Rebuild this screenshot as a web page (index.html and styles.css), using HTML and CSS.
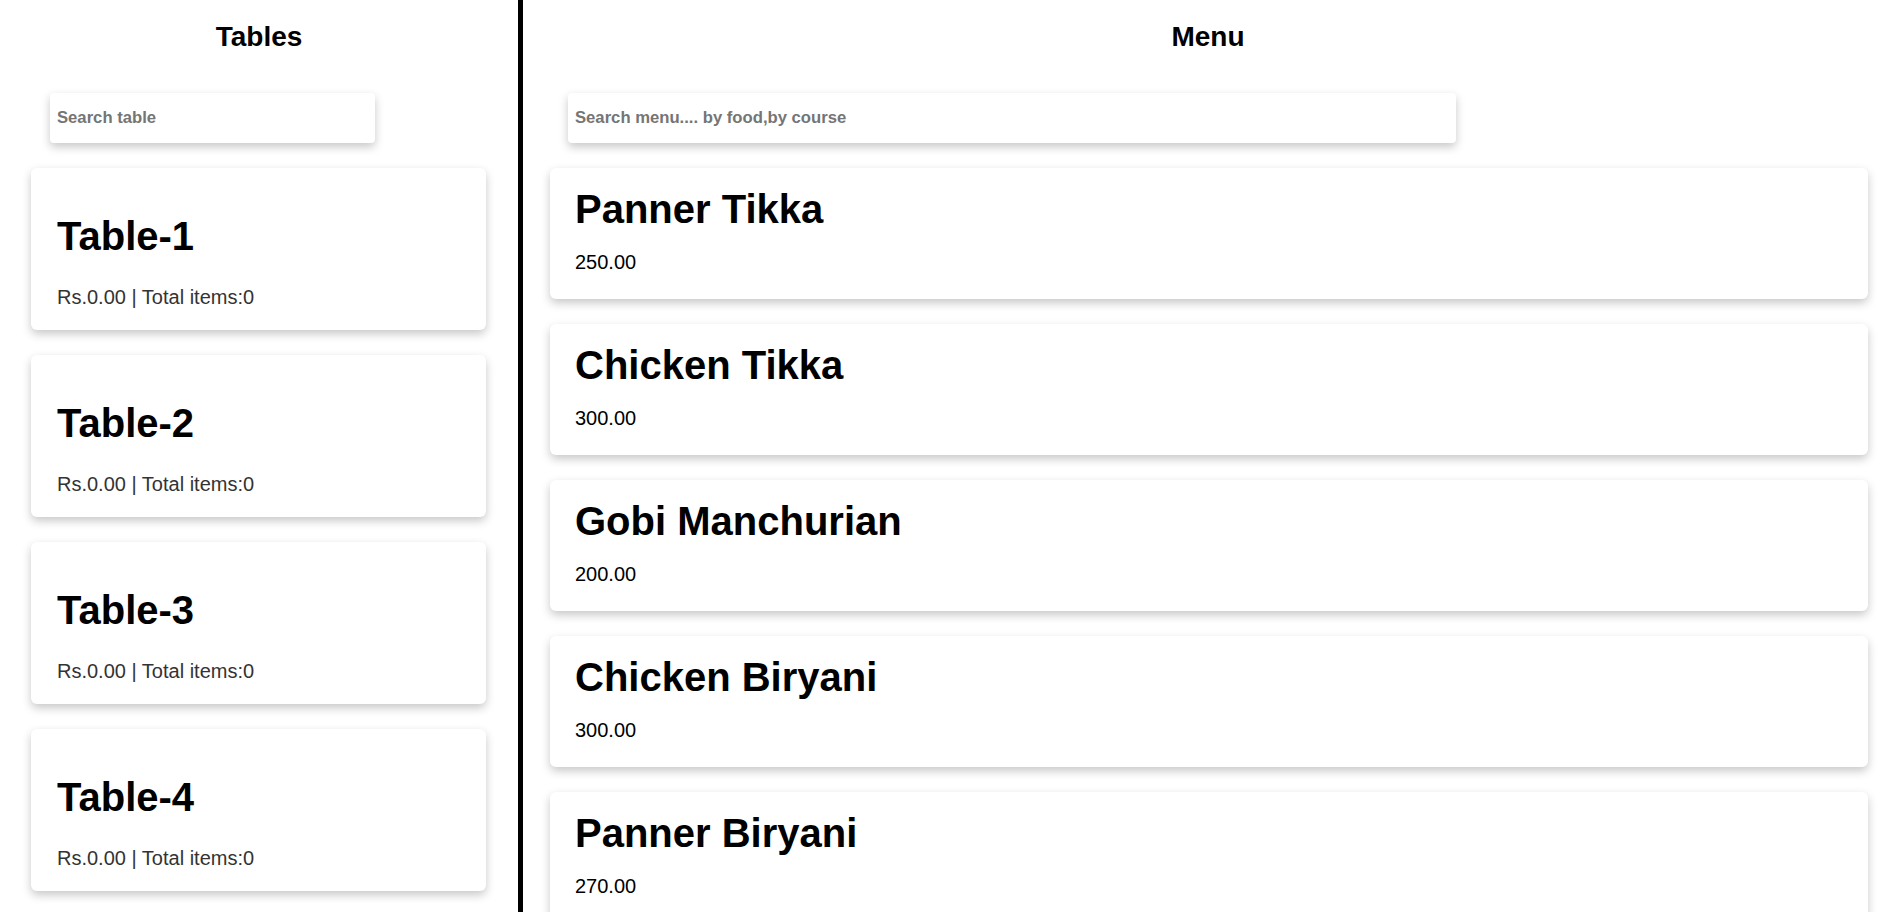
FILE: index.html
```html
<!DOCTYPE html>
<html lang="en">
<head>
<meta charset="utf-8">
<title>Tables and Menu</title>
<link rel="stylesheet" href="styles.css">
</head>
<body>
<div class="app">
  <section class="panel tables-panel">
    <h2 class="panel-title">Tables</h2>
    <input class="search search-tables" type="text" placeholder="Search table">
    <div class="list tables-list">
      <div class="card table-card">
        <h1 class="card-title">Table-1</h1>
        <p class="table-info">Rs.0.00 | Total items:0</p>
      </div>
      <div class="card table-card">
        <h1 class="card-title">Table-2</h1>
        <p class="table-info">Rs.0.00 | Total items:0</p>
      </div>
      <div class="card table-card">
        <h1 class="card-title">Table-3</h1>
        <p class="table-info">Rs.0.00 | Total items:0</p>
      </div>
      <div class="card table-card">
        <h1 class="card-title">Table-4</h1>
        <p class="table-info">Rs.0.00 | Total items:0</p>
      </div>
    </div>
  </section>
  <section class="panel menu-panel">
    <h2 class="panel-title menu-title">Menu</h2>
    <input class="search search-menu" type="text" placeholder="Search menu.... by food,by course">
    <div class="list menu-list">
      <div class="card menu-card">
        <h1 class="card-title">Panner Tikka</h1>
        <p class="price">250.00</p>
      </div>
      <div class="card menu-card">
        <h1 class="card-title">Chicken Tikka</h1>
        <p class="price">300.00</p>
      </div>
      <div class="card menu-card">
        <h1 class="card-title">Gobi Manchurian</h1>
        <p class="price">200.00</p>
      </div>
      <div class="card menu-card">
        <h1 class="card-title">Chicken Biryani</h1>
        <p class="price">300.00</p>
      </div>
      <div class="card menu-card">
        <h1 class="card-title">Panner Biryani</h1>
        <p class="price">270.00</p>
      </div>
    </div>
  </section>
</div>
</body>
</html>
```

FILE: styles.css
```css
* {
  box-sizing: border-box;
}

html, body {
  margin: 0;
  padding: 0;
  height: 100%;
  overflow: hidden;
  background: #fff;
}

body {
  font-family: "Liberation Sans", Arial, sans-serif;
  font-size: 20px;
  color: #000;
}

.app {
  display: flex;
  height: 100vh;
}

.panel {
  display: flex;
  flex-direction: column;
  height: 100%;
  overflow: hidden;
}

.panel > * {
  flex-shrink: 0;
}

.tables-panel {
  width: 523px;
  flex: 0 0 523px;
  border-right: 5px solid #000;
}

.menu-panel {
  flex: 1 1 auto;
  min-width: 0;
}

.panel-title {
  margin: 21px 0 0;
  font-size: 28px;
  font-weight: 700;
  line-height: 32px;
  text-align: center;
}

.menu-title {
  padding-left: 12px;
}

.search {
  display: block;
  height: 50px;
  margin-top: 40px;
  padding: 0 7px;
  border: none;
  border-radius: 4px;
  background: #fff;
  box-shadow: 0 4px 10px rgba(0, 0, 0, 0.22);
  font-family: "Liberation Sans", Arial, sans-serif;
  font-size: 16.67px;
  font-weight: 700;
  color: #333;
  outline: none;
}

.search::placeholder {
  color: #757575;
  opacity: 1;
}

.search-tables {
  width: 325px;
  margin-left: 50px;
}

.search-menu {
  width: 888px;
  margin-left: 45px;
}

.list {
  display: flex;
  flex-direction: column;
  margin-top: 25px;
}

.tables-list {
  gap: 25px;
  padding-left: 31px;
}

.menu-list {
  gap: 25px;
  padding-left: 27px;
  padding-right: 13px;
}

.card {
  flex: 0 0 auto;
  background: #fff;
  border-radius: 6px;
  box-shadow: 0 4px 10px rgba(0, 0, 0, 0.22);
}

.card-title {
  font-size: 40px;
  font-weight: 700;
  line-height: 46px;
  color: #000;
}

.table-card {
  width: 455px;
  padding: 18px 26px 0;
}

.table-card .card-title {
  margin: 27px 0 27px;
}

.table-info {
  margin: 0 0 21px;
  font-size: 20px;
  line-height: 23px;
  color: #333;
}

.menu-card {
  padding: 18px 25px 25px;
}

.menu-card .card-title {
  margin: 0 0 19px;
}

.price {
  margin: 0;
  font-size: 20px;
  line-height: 23px;
  color: #000;
}
```
